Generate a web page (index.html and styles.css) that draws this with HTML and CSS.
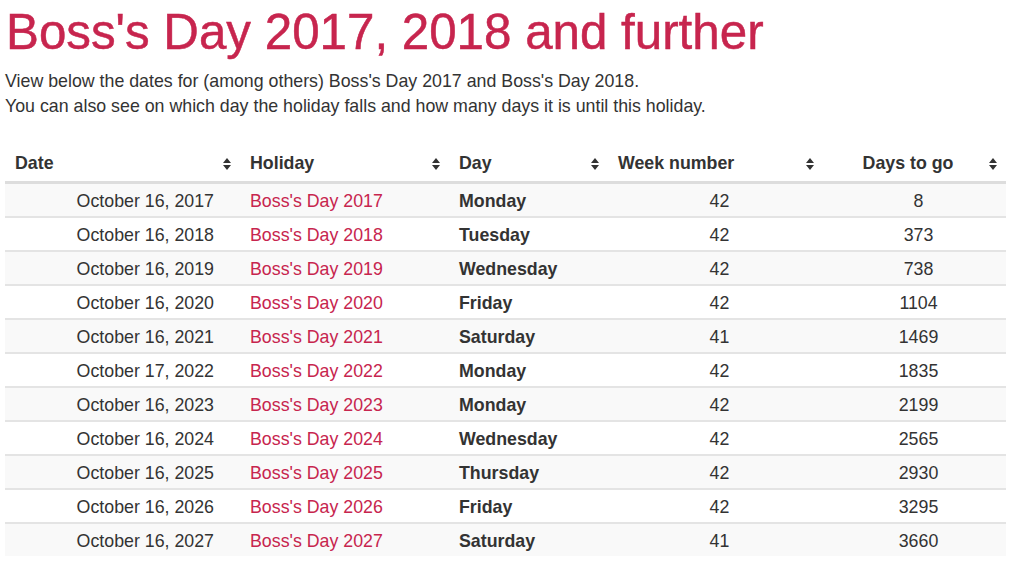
FILE: index.html
```html
<!DOCTYPE html>
<html lang="en">
<head>
<meta charset="utf-8">
<title>Boss's Day 2017, 2018 and further</title>
<link rel="stylesheet" href="styles.css">
</head>
<body>
<div class="page">
  <h1 class="title">Boss's Day 2017, 2018 and further</h1>
  <p class="intro">View below the dates for (among others) Boss's Day 2017 and Boss's Day 2018.<br>You can also see on which day the holiday falls and how many days it is until this holiday.</p>
  <table class="dates">
    <colgroup>
      <col class="c-date"><col class="c-holiday"><col class="c-day"><col class="c-week"><col class="c-togo">
    </colgroup>
    <thead>
      <tr>
        <th><div class="th-in"><span class="th-label">Date</span><svg class="sort" viewBox="0 0 8 12"><path d="M4 0 L8 5 L0 5 Z M0 7 L8 7 L4 12 Z"/></svg></div></th>
        <th><div class="th-in"><span class="th-label">Holiday</span><svg class="sort" viewBox="0 0 8 12"><path d="M4 0 L8 5 L0 5 Z M0 7 L8 7 L4 12 Z"/></svg></div></th>
        <th><div class="th-in"><span class="th-label">Day</span><svg class="sort" viewBox="0 0 8 12"><path d="M4 0 L8 5 L0 5 Z M0 7 L8 7 L4 12 Z"/></svg></div></th>
        <th><div class="th-in"><span class="th-label">Week number</span><svg class="sort" viewBox="0 0 8 12"><path d="M4 0 L8 5 L0 5 Z M0 7 L8 7 L4 12 Z"/></svg></div></th>
        <th><div class="th-in"><span class="th-label center">Days to go</span><svg class="sort" viewBox="0 0 8 12"><path d="M4 0 L8 5 L0 5 Z M0 7 L8 7 L4 12 Z"/></svg></div></th>
      </tr>
    </thead>
    <tbody>
      <tr><td class="date">October 16, 2017</td><td><a href="#">Boss's Day 2017</a></td><td class="day">Monday</td><td class="num">42</td><td class="num">8</td></tr>
      <tr><td class="date">October 16, 2018</td><td><a href="#">Boss's Day 2018</a></td><td class="day">Tuesday</td><td class="num">42</td><td class="num">373</td></tr>
      <tr><td class="date">October 16, 2019</td><td><a href="#">Boss's Day 2019</a></td><td class="day">Wednesday</td><td class="num">42</td><td class="num">738</td></tr>
      <tr><td class="date">October 16, 2020</td><td><a href="#">Boss's Day 2020</a></td><td class="day">Friday</td><td class="num">42</td><td class="num">1104</td></tr>
      <tr><td class="date">October 16, 2021</td><td><a href="#">Boss's Day 2021</a></td><td class="day">Saturday</td><td class="num">41</td><td class="num">1469</td></tr>
      <tr><td class="date">October 17, 2022</td><td><a href="#">Boss's Day 2022</a></td><td class="day">Monday</td><td class="num">42</td><td class="num">1835</td></tr>
      <tr><td class="date">October 16, 2023</td><td><a href="#">Boss's Day 2023</a></td><td class="day">Monday</td><td class="num">42</td><td class="num">2199</td></tr>
      <tr><td class="date">October 16, 2024</td><td><a href="#">Boss's Day 2024</a></td><td class="day">Wednesday</td><td class="num">42</td><td class="num">2565</td></tr>
      <tr><td class="date">October 16, 2025</td><td><a href="#">Boss's Day 2025</a></td><td class="day">Thursday</td><td class="num">42</td><td class="num">2930</td></tr>
      <tr><td class="date">October 16, 2026</td><td><a href="#">Boss's Day 2026</a></td><td class="day">Friday</td><td class="num">42</td><td class="num">3295</td></tr>
      <tr><td class="date">October 16, 2027</td><td><a href="#">Boss's Day 2027</a></td><td class="day">Saturday</td><td class="num">41</td><td class="num">3660</td></tr>
    </tbody>
  </table>
</div>
</body>
</html>
```
FILE: styles.css
```css
html, body {
  margin: 0;
  padding: 0;
  background: #fff;
}
body {
  font-family: "Liberation Sans", Arial, Helvetica, sans-serif;
  color: #333;
  font-size: 17.8px;
}
.page {
  padding: 5px 0 0 5px;
  width: 1001px;
}
.title {
  margin: 0;
  font-size: 49.3px;
  line-height: 53px;
  font-weight: 400;
  color: #c7254e;
  -webkit-text-stroke: 0.5px #c7254e;
  padding-left: 1px;
}
.intro {
  margin: 11px 0 0;
  line-height: 25px;
  font-size: 17.8px;
}
.dates {
  margin-top: 26px;
  width: 1001px;
  border-collapse: collapse;
  table-layout: fixed;
}
.c-date { width: 235px; }
.c-holiday { width: 209px; }
.c-day { width: 159px; }
.c-week { width: 215px; }
.c-togo { width: 183px; }
.dates th {
  padding: 9px 9px 8px 10px;
  text-align: left;
  font-weight: 700;
  line-height: 19px;
  border-bottom: 3px solid #ddd;
}
.th-in {
  display: flex;
  align-items: center;
}
.th-label {
  flex: 1;
}
.th-label.center {
  text-align: center;
  padding-right: 6px;
}
.sort {
  width: 8px;
  height: 12px;
  fill: #333;
  flex: none;
}
.dates td {
  padding: 9px 10px 7px;
  line-height: 16px;
  border-top: 2px solid #e4e4e4;
  white-space: nowrap;
}
.dates tbody tr:first-child td {
  border-top: none;
}
.dates tbody tr:nth-child(odd) {
  background: #f9f9f9;
}
.dates td.date {
  text-align: right;
  padding-right: 26px;
}
.dates td.day {
  font-weight: 700;
}
.dates td.num {
  text-align: center;
  padding-left: 16px;
  padding-right: 8px;
}
.dates a {
  color: #c7254e;
  text-decoration: none;
}
```
